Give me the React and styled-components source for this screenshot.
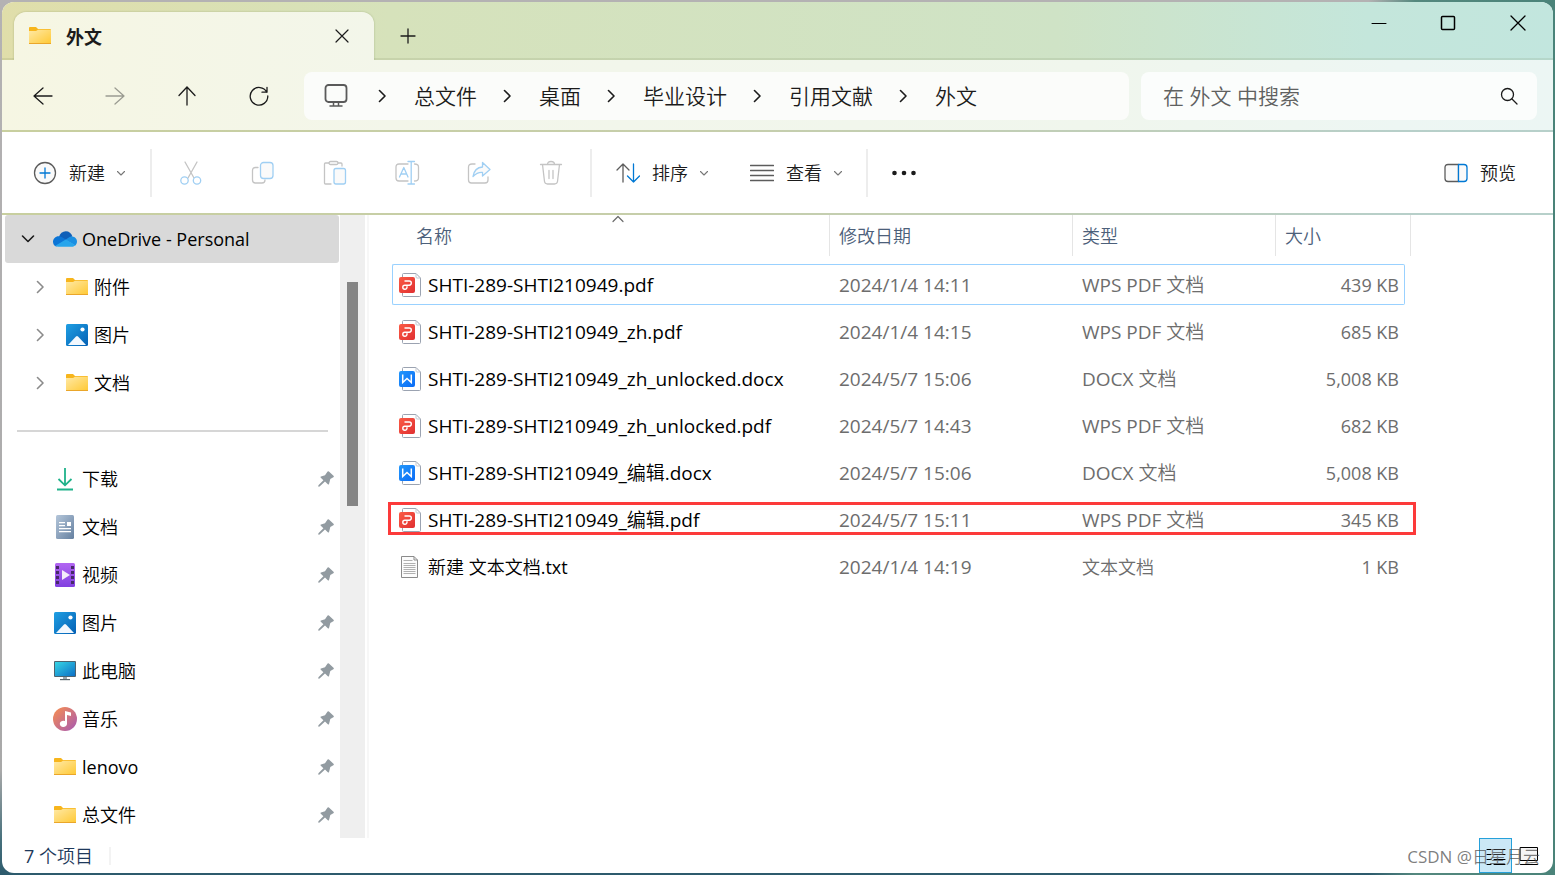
import React from 'react';
import styled, { createGlobalStyle } from 'styled-components';

const colors = {
	ink: '#1b1b1b',
	text: '#000',
	muted: '#6d6d6d',
	header: '#4c607a',
	status: '#1e395b',
	line: '#e5e5e5',
	disabled: '#c4c4c4',
	disabledBlue: '#a0cff3',
	glyph: '#5c5c5c',
	blue: '#0078d4',
	chrome: 'linear-gradient(90deg, #e0deaa 0%, #d6e2bb 25%, #cfe3c6 68%, #c4e6db 88%, #c2e6de 100%)',
	chromeLight: 'linear-gradient(90deg, #f6f6e3 0%, #f3f6ea 25%, #f0f6ed 70%, #edf6f3 90%, #ecf6f4 100%)',
	edge: 'linear-gradient(90deg, #c8cf9f 0%, #c6ceab 45%, #bfceb9 72%, #b7cfc9 90%, #b7d0ca 100%)'
};

const GlobalStyle = createGlobalStyle`
	* {
		box-sizing: border-box;
	}
	body {
		margin: 0;
		font-family: 'Open Sans', 'Noto Sans CJK SC DemiLight', 'Noto Sans CJK SC', sans-serif;
		font-size: 18px;
		line-height: 24px;
		color: ${colors.text};
		overflow: hidden;
	}
	button, input {
		font: inherit;
		color: inherit;
		border: none;
		background: none;
		padding: 0;
		margin: 0;
	}
	a {
		color: inherit;
		text-decoration: none;
	}
	svg {
		display: block;
		flex: none;
	}
`;

const Desktop = styled.div`
	height: 100vh;
	padding: 2px;
	background:
		linear-gradient(90deg, transparent 88%, #54887e 91%, #4a8379 100%),
		linear-gradient(180deg, #b4b2b3 0%, #a9a9a9 88%, #47707c 96%, #2c5a6c 100%);
`;

const Window = styled.div`
	height: 100%;
	display: flex;
	flex-direction: column;
	position: relative;
	overflow: hidden;
	border-radius: 12px;
	background: #fff;
`;

const TabStrip = styled.header`
	height: 58px;
	flex: none;
	display: flex;
	align-items: flex-end;
	padding-left: 12px;
	background: ${colors.chrome};
	box-shadow: inset 0 -2px 0 rgba(90, 110, 60, 0.12);
`;

const Tab = styled.div`
	width: 360px;
	height: 48px;
	display: flex;
	align-items: center;
	padding: 0 25px 0 14px;
	border-radius: 12px 12px 0 0;
	background: linear-gradient(90deg, #f6f6e3, #f3f6ea);
	box-shadow: 0 0 2px rgba(90, 110, 60, 0.4);
`;

const TabTitle = styled.span`
	flex: 1;
	margin-left: 14px;
	font-family: 'Noto Sans CJK SC', sans-serif;
	font-weight: 700;
	color: ${colors.ink};
`;

const IconButton = styled.button`
	width: ${props => props.$width || 72}px;
	height: 48px;
	display: flex;
	align-items: center;
	justify-content: center;
`;

const Caption = styled.div`
	display: flex;
	align-self: flex-start;
	margin-left: auto;
	button {
		height: 42px;
	}
`;

const NavBar = styled.nav`
	height: 70px;
	flex: none;
	display: flex;
	align-items: center;
	padding: 2px 16px 0 5px;
	background: ${colors.chromeLight};
`;

const Edge = styled.div`
	height: 2px;
	flex: none;
	background: ${colors.edge};
`;

const Address = styled.div`
	flex: 1;
	height: 48px;
	margin: 0 12px 0 9px;
	padding-left: 20px;
	display: flex;
	align-items: center;
	border-radius: 8px;
	background: #fbfcfa;
	font-size: 21px;
	color: ${colors.ink};
	white-space: nowrap;
`;

const Crumb = styled.a`
	margin-left: 26px;
	display: flex;
	align-items: center;
	gap: 28px;
	&:first-of-type {
		margin-left: 30px;
	}
`;

const SearchBox = styled.label`
	width: 396px;
	height: 48px;
	display: flex;
	align-items: center;
	padding: 0 18px 0 22px;
	border-radius: 8px;
	background: #fbfdfc;
	input {
		flex: 1;
		min-width: 0;
		font-size: 21px;
		outline: none;
	}
	input::placeholder {
		color: #5f6160;
		opacity: 1;
	}
`;

const Toolbar = styled.div`
	height: 81px;
	flex: none;
	display: flex;
	align-items: center;
	padding: 0 37px 0 31px;
	color: ${colors.ink};
`;

const ToolButton = styled.button`
	height: 48px;
	display: flex;
	align-items: center;
	gap: 12px;
	margin-right: ${props => props.$after || 0}px;
	margin-left: ${props => (props.$end ? 'auto' : 0)};
`;

const Separator = styled.div`
	width: 2px;
	height: 48px;
	margin: 0 ${props => props.$after || 0}px 0 ${props => props.$before || 0}px;
	background: #ededed;
`;

const Body = styled.div`
	flex: 1;
	min-height: 0;
	display: flex;
`;

const Sidebar = styled.aside`
	width: 338px;
	flex: none;
	padding: 0 1px 0 3px;
	overflow: hidden;
`;

const SideItem = styled.a`
	height: 48px;
	display: flex;
	align-items: center;
	padding: 0 5px 0 ${props => (props.$nested ? 24 : 12)}px;
	border-radius: 3px;
	background: ${props => (props.$selected ? '#d9d9d9' : 'transparent')};
	> svg:last-child {
		margin-left: auto;
	}
`;

const Arrow = styled.span`
	width: 22px;
	display: flex;
	justify-content: center;
`;

const SideIcon = styled.span`
	width: 24px;
	margin: 0 5px 0 14px;
	display: flex;
	justify-content: center;
`;

const Divider = styled.hr`
	height: 2px;
	margin: 23px 11px 23px 12px;
	border: none;
	background: #d6d6d6;
`;

const Scrollbar = styled.div`
	width: 25px;
	flex: none;
	padding: 67px 7px 0;
	background: #efefef;
`;

const Thumb = styled.div`
	height: 224px;
	background: #858585;
`;

const Pane = styled.main`
	flex: 1;
	min-width: 0;
	margin-left: 2px;
	padding-left: 23px;
	border-left: 2px solid #f7f7f7;
`;

const FileTable = styled.table`
	width: 1013px;
	margin-top: -6px;
	table-layout: fixed;
	border-collapse: separate;
	border-spacing: 0 6px;
`;

const HeadCell = styled.th`
	width: ${props => props.$width}px;
	height: 43px;
	padding: 0;
	vertical-align: top;
	text-align: left;
	font-weight: inherit;
	color: ${colors.header};
`;

const HeadLabel = styled.div`
	height: 41px;
	display: flex;
	align-items: center;
	position: relative;
	padding-left: ${props => (props.$first ? 24 : 9)}px;
	margin-right: ${props => (props.$last ? -6 : 0)}px;
	border-right: 1px solid ${colors.line};
`;

const SortMark = styled.span`
	position: absolute;
	top: 0;
	left: 220px;
`;

const Row = styled.tr`
	position: relative;
	height: 41px;
	td {
		border: 1px solid ${props => (props.$focused ? '#99d1ff' : 'transparent')};
		border-left-width: 0;
		border-right-width: 0;
		white-space: nowrap;
	}
	td:first-child {
		border-left-width: 1px;
		border-radius: 2px 0 0 2px;
	}
	td:last-child {
		border-right-width: 1px;
		border-radius: 0 2px 2px 0;
	}
`;

const Cell = styled.td`
	padding: 0 5px 0 9px;
	font-size: ${props => (props.$latin ? 19 : 18)}px;
	text-align: ${props => props.$align || 'left'};
	color: ${colors.muted};
`;

const NameCell = styled.td`
	padding: 0 0 0 6px;
	font-size: ${props => (props.$latin ? 19 : 18)}px;
	color: ${colors.text};
`;

const FileName = styled.a`
	display: flex;
	align-items: center;
	gap: 7px;
`;

const Highlight = styled.span`
	position: absolute;
	top: 3px;
	right: -11px;
	bottom: 5px;
	left: -4px;
	border: 3px solid #fc3a3a;
	pointer-events: none;
`;

const StatusBar = styled.footer`
	height: 35px;
	flex: none;
	display: flex;
	align-items: center;
	padding: 0 8px 0 22px;
	color: ${colors.status};
`;

const StatusRule = styled.span`
	width: 2px;
	height: 18px;
	margin: 0 auto 0 16px;
	background: #f3f3f3;
`;

const ViewButton = styled.button`
	width: 33px;
	height: 35px;
	display: flex;
	align-items: center;
	justify-content: center;
	border: 1px solid ${props => (props.$active ? '#26a0da' : 'transparent')};
	background: ${props => (props.$active ? '#cbe8f6' : 'transparent')};
`;

const Watermark = styled.span`
	position: absolute;
	right: 13px;
	bottom: 4px;
	font-size: 17px;
	color: rgba(70, 70, 70, 0.7);
	pointer-events: none;
`;

/* ---------- icons ---------- */

const Line = ({ w = 24, h = 24, color = colors.ink, width = 1.3, children }) => (
	<svg width={w} height={h} viewBox={`0 0 ${w} ${h}`} fill="none" stroke={color} strokeWidth={width} strokeLinecap="round" strokeLinejoin="round" aria-hidden="true">
		{children}
	</svg>
);

const ChevronRight = ({ color = colors.ink, width = 1.6 }) => (
	<Line w={8} h={14} color={color} width={width}>
		<path d="M1.500 1.500 7 7l-5.500 5.500" />
	</Line>
);

const ChevronDown = () => (
	<Line w={8} h={8} color="#777" width={1.1}>
		<path d="M.500 2.500L4 6l3.500-3.500" />
	</Line>
);

const Folder = () => (
	<svg width="24" height="20" viewBox="0 0 24 20" aria-hidden="true">
		<defs>
			<linearGradient id="folder" x1="0" y1="0" x2="1" y2="1">
				<stop offset="0" stopColor="#ffe9a6" />
				<stop offset="1" stopColor="#ffc935" />
			</linearGradient>
		</defs>
		<path d="M1 2q0-1 1-1h6l2 2h12q1 0 1 1v2H1z" fill="#f7b51c" />
		<path d="M1 5h7l2-1.200h13V17.500H1z" fill="url(#folder)" />
		<path d="M1 17h22v1H1z" fill="#eaa62a" />
	</svg>
);

const Cloud = () => (
	<svg width="24" height="16" viewBox="0 0 24 16" aria-hidden="true">
		<path d="M6 6C7 2.500 9.500.300 12.800.300c3.200 0 5.700 2 6.500 5L13 10z" fill="#0f5fb8" />
		<path d="M5.500 5.200c2 0 3 .6 4.500 1.600l6 4L3 15.500C1.200 14.700 0 13 0 10.800 0 7.700 2.500 5.200 5.500 5.200z" fill="#0c75d6" />
		<path d="M18.800 5.500c2.900 0 5.200 2.200 5.200 5 0 1.600-.7 3-1.800 3.900L12.500 8.800c2-1 3.700-3.300 6.300-3.300z" fill="#1a8fe2" />
		<path d="M12.800 8.500l9.700 5.700c-.9.900-2.200 1.500-3.500 1.500H5.300c-1.200 0-2.200-.4-3-.9z" fill="#27a5ec" />
	</svg>
);

const Picture = () => (
	<svg width="22" height="22" viewBox="0 0 22 22" aria-hidden="true">
		<defs>
			<linearGradient id="picture" x1="0" y1="0" x2="1" y2="1">
				<stop offset="0" stopColor="#1f9fe3" />
				<stop offset="1" stopColor="#0460b4" />
			</linearGradient>
		</defs>
		<rect width="22" height="22" rx="1.500" fill="url(#picture)" />
		<path d="M2 21l8-8.500q1-1 2 0l8 8.500z" fill="#f2f8fe" />
		<circle cx="16.500" cy="5.500" r="2.100" fill="#fff" />
	</svg>
);

const Download = () => (
	<svg width="18" height="24" viewBox="0 0 18 24" fill="none" stroke="#1fb28a" strokeWidth="1.800" aria-hidden="true">
		<path d="M9 1v17M2.500 12L9 18.300l6.500-6.300M1 22.500h16" />
	</svg>
);

const Document = () => (
	<svg width="18" height="24" viewBox="0 0 18 24" aria-hidden="true">
		<defs>
			<linearGradient id="doc" x1="0" y1="0" x2="1" y2="1">
				<stop offset="0" stopColor="#b4c6da" />
				<stop offset="1" stopColor="#6580a0" />
			</linearGradient>
		</defs>
		<rect width="18" height="24" rx="1.500" fill="url(#doc)" />
		<path d="M3 7h6v1.300H3zM3 10h6v1.300H3zM3 13h12v1.300H3zM3 16h12v1.300H3zM11 7h4v4h-4z" fill="#fff" />
	</svg>
);

const Video = () => (
	<svg width="20" height="24" viewBox="0 0 20 24" aria-hidden="true">
		<defs>
			<linearGradient id="video" x1="0" y1="0" x2="0" y2="1">
				<stop offset="0" stopColor="#b266f2" />
				<stop offset="1" stopColor="#8140e0" />
			</linearGradient>
		</defs>
		<rect width="20" height="24" rx="1.500" fill="url(#video)" />
		<path d="M1 3h3v3H1zM1 8h3v3H1zM1 13h3v3H1zM1 18h3v3H1zM16 3h3v3h-3zM16 8h3v3h-3zM16 13h3v3h-3zM16 18h3v3h-3z" fill="#472a68" />
		<path d="M7 7l8 5-8 5z" fill="#f3ecfa" />
	</svg>
);

const Monitor = () => (
	<svg width="22" height="20" viewBox="0 0 22 20" aria-hidden="true">
		<defs>
			<linearGradient id="monitor" x1="0" y1="0" x2="1" y2="1">
				<stop offset="0" stopColor="#36d5e5" />
				<stop offset="1" stopColor="#0c6fc6" />
			</linearGradient>
		</defs>
		<rect width="22" height="16" rx="1" fill="#4d6370" />
		<rect x="1" y="1" width="20" height="14" fill="url(#monitor)" />
		<path d="M9 16h4v2H9z" fill="#9aa7ae" />
		<path d="M6 18h10v1.200H6z" fill="#59666d" />
	</svg>
);

const Music = () => (
	<svg width="24" height="24" viewBox="0 0 24 24" aria-hidden="true">
		<defs>
			<linearGradient id="music" x1="0" y1="0" x2="1" y2="1">
				<stop offset=".1" stopColor="#f18a58" />
				<stop offset="1" stopColor="#a558b4" />
			</linearGradient>
		</defs>
		<circle cx="12" cy="12" r="12" fill="url(#music)" />
		<path d="M12 4l6 1.500V9l-4-1v9a3.600 3.200 0 1 1-2-3z" fill="#fff" />
	</svg>
);

const Pin = () => (
	<svg width="16" height="16" viewBox="0 0 16 16" aria-hidden="true">
		<path d="M9.600.400q.7-.5 1.300.1l4.600 4.300q.8.900-.2 1.500l-3 1.700q-.6 2.500-1.300 5-.4 1-1.200.3L7 10.600 1.600 15.600.300 15.700l.1-1.400L5.400 9.200 2.800 6.800q-.8-.9.200-1.300l4-1.300z" fill="#929ba1" />
	</svg>
);

const Sheet = ({ from, to, id, children }) => (
	<svg width="22" height="24" viewBox="0 0 22 24" fill="none" aria-hidden="true">
		<defs>
			<linearGradient id={id} x1="0" y1="0" x2="1" y2="1">
				<stop offset="0" stopColor={from} />
				<stop offset="1" stopColor={to} />
			</linearGradient>
		</defs>
		<path d="M3.500 4V1.500q0-1 1-1H17L21.500 5v17.500q0 1-1 1h-16q-1 0-1-1V20" fill="#fff" stroke="#9ba3b1" />
		<path d="M17 .5V4q0 1 1 1h3.500" stroke="#c3c8d1" />
		<rect y="4" width="16" height="16" rx="2" fill={`url(#${id})`} />
		{children}
	</svg>
);

const PdfIcon = () => (
	<Sheet id="pdf" from="#fb5b45" to="#e02f31">
		<path d="M6 8h4.200a2.100 2.100 0 0 1 0 4.200H5.800a2 2 0 0 0 0 4 2 2 0 0 0 2.200-2v-.6" stroke="#fff" strokeWidth="1.400" strokeLinecap="round" />
	</Sheet>
);

const WordIcon = () => (
	<Sheet id="word" from="#2498fb" to="#0a6bf6">
		<path d="M3.700 7.500v8L8 11.500l4.300 4v-8" stroke="#fff" strokeWidth="1.500" />
	</Sheet>
);

const TextIcon = () => (
	<svg width="22" height="22" viewBox="0 0 22 22" fill="none" aria-hidden="true">
		<path d="M2.500.500H15L18.500 4v17.500h-16z" fill="#fcfcfc" stroke="#8b8b8b" />
		<path d="M15 .5V4h3.500" stroke="#8b8b8b" />
		<path d="M4.500 4.500h9M4.500 7.500h12M4.500 9.500h12M4.500 11.500h12M4.500 13.500h12M4.500 15.500h12M4.500 17.500h12" stroke="#b1b1b1" />
	</svg>
);

/* ---------- data ---------- */

const crumbs = ['总文件', '桌面', '毕业设计', '引用文献', '外文'];

const cloudItems = [
	{ name: '附件', icon: Folder },
	{ name: '图片', icon: Picture },
	{ name: '文档', icon: Folder }
];

const pinned = [
	{ name: '下载', icon: Download },
	{ name: '文档', icon: Document },
	{ name: '视频', icon: Video },
	{ name: '图片', icon: Picture },
	{ name: '此电脑', icon: Monitor },
	{ name: '音乐', icon: Music },
	{ name: 'lenovo', icon: Folder },
	{ name: '总文件', icon: Folder }
];

const files = [
	{ name: 'SHTI-289-SHTI210949.pdf', date: '2024/1/4 14:11', type: 'WPS PDF 文档', size: '439 KB', icon: PdfIcon, focused: true },
	{ name: 'SHTI-289-SHTI210949_zh.pdf', date: '2024/1/4 14:15', type: 'WPS PDF 文档', size: '685 KB', icon: PdfIcon },
	{ name: 'SHTI-289-SHTI210949_zh_unlocked.docx', date: '2024/5/7 15:06', type: 'DOCX 文档', size: '5,008 KB', icon: WordIcon },
	{ name: 'SHTI-289-SHTI210949_zh_unlocked.pdf', date: '2024/5/7 14:43', type: 'WPS PDF 文档', size: '682 KB', icon: PdfIcon },
	{ name: 'SHTI-289-SHTI210949_编辑.docx', date: '2024/5/7 15:06', type: 'DOCX 文档', size: '5,008 KB', icon: WordIcon },
	{ name: 'SHTI-289-SHTI210949_编辑.pdf', date: '2024/5/7 15:11', type: 'WPS PDF 文档', size: '345 KB', icon: PdfIcon, marked: true },
	{ name: '新建 文本文档.txt', date: '2024/1/4 14:19', type: '文本文档', size: '1 KB', icon: TextIcon }
];

const isLatin = text => /^\w/.test(text);

/* ---------- parts ---------- */

const TitleBar = () => (
	<TabStrip>
		<Tab>
			<Folder />
			<TabTitle>外文</TabTitle>
			<button aria-label="关闭标签页">
				<Line w={14} h={14} width={1.2}>
					<path d="M1 1l12 12M13 1L1 13" />
				</Line>
			</button>
		</Tab>
		<IconButton $width={68} aria-label="新建标签页">
			<Line w={16} h={16} width={1.3}>
				<path d="M8 1v14M1 8h14" />
			</Line>
		</IconButton>
		<Caption>
			<IconButton $width={68} aria-label="最小化">
				<Line w={16} h={16} color="#000" width={1}>
					<path d="M1 8.500h14" />
				</Line>
			</IconButton>
			<IconButton $width={70} aria-label="最大化">
				<Line w={16} h={16} color="#000" width={1.5}>
					<rect x="1.500" y="1.500" width="13" height="13" rx="1" />
				</Line>
			</IconButton>
			<IconButton $width={70} aria-label="关闭">
				<Line w={16} h={16} color="#000">
					<path d="M1 1l14 14M15 1L1 15" />
				</Line>
			</IconButton>
		</Caption>
	</TabStrip>
);

const Navigation = () => (
	<NavBar>
		<IconButton aria-label="后退">
			<Line w={20} h={20}>
				<path d="M19 10H1M10 2L1 10l9 8" />
			</Line>
		</IconButton>
		<IconButton aria-label="前进" disabled>
			<Line w={20} h={20} color="#9b9c92">
				<path d="M1 10h18M10 2l9 8-9 8" />
			</Line>
		</IconButton>
		<IconButton aria-label="向上">
			<Line w={20} h={20}>
				<path d="M10 19V1M2 9.500L10 1l8 8.500" />
			</Line>
		</IconButton>
		<IconButton aria-label="刷新">
			<Line w={20} h={20}>
				<path d="M17.800 6.200A8.800 8.800 0 1 0 18.800 10M18 1.500V6.200H13" />
			</Line>
		</IconButton>
		<Address>
			<Line color="#5a5a5a" width={1.8}>
				<rect x="1.500" y="1" width="21" height="17" rx="3" />
				<path d="M9.500 18v3.500M14.500 18v3.500M6 22h12" strokeWidth={1.5} />
			</Line>
			{crumbs.map(name => (
				<Crumb key={name} href="#">
					<ChevronRight />
					{name}
				</Crumb>
			))}
		</Address>
		<SearchBox>
			<input aria-label="搜索" placeholder="在 外文 中搜索" />
			<Line w={20} h={20}>
				<circle cx="8.500" cy="8.500" r="6" />
				<path d="M13 13l5 5" />
			</Line>
		</SearchBox>
	</NavBar>
);

const Commands = () => (
	<Toolbar>
		<ToolButton $after={25}>
			<Line>
				<circle cx="12" cy="12" r="10.500" fill="#fafafa" stroke={colors.glyph} />
				<path d="M12 7v10M7 12h10" stroke={colors.blue} />
			</Line>
			新建
			<ChevronDown />
		</ToolButton>
		<Separator $after={3} />
		<IconButton aria-label="剪切" disabled>
			<Line w={24} h={26} color={colors.disabled}>
				<path d="M6 2l9 16M18 2L9 18" />
				<circle cx="5.500" cy="20.500" r="3.700" stroke={colors.disabledBlue} fill="#fff" />
				<circle cx="18" cy="20.500" r="3.700" stroke={colors.disabledBlue} fill="#fff" />
			</Line>
		</IconButton>
		<IconButton aria-label="复制" disabled>
			<Line color={colors.disabled}>
				<path d="M7 6.500H4.500Q1.500 6.500 1.500 9.500v9.500q0 3 3 3H11q3 0 3-3" />
				<rect x="9.500" y="1.500" width="12.500" height="16" rx="3" stroke={colors.disabledBlue} fill="#fafafa" />
			</Line>
		</IconButton>
		<IconButton aria-label="粘贴" disabled>
			<Line h={26} color={colors.disabled}>
				<path d="M8 24H2.500q-1 0-1-1V4q0-1 1-1H6M15 3h3q1 0 1 1v2" />
				<rect x="6" y="1.500" width="9" height="3" rx="1.500" />
				<rect x="11" y="8.500" width="11.500" height="15.500" rx="2" stroke={colors.disabledBlue} fill="#fafafa" />
			</Line>
		</IconButton>
		<IconButton aria-label="重命名" disabled>
			<Line w={26} h={26} color={colors.disabled}>
				<path d="M14 4H5Q2 4 2 7v11q0 3 3 3h9M20.500 4q4 0 4 3v11q0 3-4 3" />
				<path d="M14 1.500h6.500M14 24h6.500M17.200 1.500V24M5.500 17L9.800 7.500 14 17M7 14h5.500" stroke={colors.disabledBlue} />
			</Line>
		</IconButton>
		<IconButton aria-label="共享" disabled>
			<Line color={colors.disabled}>
				<path d="M8 3H5Q1.500 3 1.500 6v13q0 3 3 3H18q3 0 3-3v-3" />
				<path d="M15.500 1.500l7.500 7-7.500 6.500V11.500q-5-.5-9.500 4 1.500-9 9.500-9.500z" stroke={colors.disabledBlue} fill="#fafafa" />
			</Line>
		</IconButton>
		<IconButton aria-label="删除" disabled>
			<Line h={26} color={colors.disabled}>
				<path d="M1.500 4.500h21M8.500 4.500q0-3 3.500-3t3.500 3M3.500 4.500l2 17q.4 2.500 3 2.500h7q2.600 0 3-2.500l2-17M10 10.500v8M14 10.500v8" />
			</Line>
		</IconButton>
		<Separator $before={3} $after={24} />
		<ToolButton $after={42}>
			<Line>
				<path d="M7 21V3M1 9l6-6 6 6" stroke={colors.glyph} />
				<path d="M17.500 3v18M11.500 15l6 6 6-6" stroke={colors.blue} />
			</Line>
			排序
			<ChevronDown />
		</ToolButton>
		<ToolButton $after={24}>
			<Line color={colors.glyph}>
				<path d="M.500 4.500h23M.500 9.500h23M.500 14.500h23M.500 19.500h23" />
			</Line>
			查看
			<ChevronDown />
		</ToolButton>
		<Separator />
		<IconButton aria-label="更多">
			<svg width="24" height="6" viewBox="0 0 24 6" fill={colors.ink} aria-hidden="true">
				<circle cx="2.500" cy="3" r="2.300" />
				<circle cx="12" cy="3" r="2.300" />
				<circle cx="21.500" cy="3" r="2.300" />
			</svg>
		</IconButton>
		<ToolButton $end>
			<Line>
				<path d="M14.500 3.500H4q-3 0-3 3v11q0 3 3 3h10.500z" stroke={colors.glyph} fill="#fafafa" />
				<path d="M14.500 3.500H20q3 0 3 3v11q0 3-3 3h-5.500z" stroke={colors.blue} fill="#fafafa" />
			</Line>
			预览
		</ToolButton>
	</Toolbar>
);

const SideNav = () => (
	<Sidebar>
		<SideItem href="#" $selected>
			<Arrow>
				<Line w={14} h={10} width={1.6}>
					<path d="M1.500 2L7 7.500 12.500 2" />
				</Line>
			</Arrow>
			<SideIcon>
				<Cloud />
			</SideIcon>
			OneDrive - Personal
		</SideItem>
		{cloudItems.map(({ name, icon: Icon }) => (
			<SideItem key={name} href="#" $nested>
				<Arrow>
					<ChevronRight color="#8b8b8b" />
				</Arrow>
				<SideIcon>
					<Icon />
				</SideIcon>
				{name}
			</SideItem>
		))}
		<Divider />
		{pinned.map(({ name, icon: Icon }) => (
			<SideItem key={name} href="#">
				<Arrow />
				<SideIcon>
					<Icon />
				</SideIcon>
				{name}
				<Pin />
			</SideItem>
		))}
	</Sidebar>
);

const FileList = () => (
	<Pane>
		<FileTable>
			<thead>
				<tr>
					<HeadCell $width={438}>
						<HeadLabel $first>
							名称
							<SortMark>
								<Line w={12} h={8} color="#6b6b6b" width={1.2}>
									<path d="M1 6.500l5-5 5 5" />
								</Line>
							</SortMark>
						</HeadLabel>
					</HeadCell>
					<HeadCell $width={243}>
						<HeadLabel>修改日期</HeadLabel>
					</HeadCell>
					<HeadCell $width={203}>
						<HeadLabel>类型</HeadLabel>
					</HeadCell>
					<HeadCell $width={129}>
						<HeadLabel $last>大小</HeadLabel>
					</HeadCell>
				</tr>
			</thead>
			<tbody>
				{files.map(({ name, date, type, size, icon: Icon, focused, marked }) => (
					<Row key={name} $focused={focused}>
						<NameCell $latin={isLatin(name)}>
							<FileName href="#">
								<Icon />
								{name}
							</FileName>
							{marked && <Highlight />}
						</NameCell>
						<Cell $latin>{date}</Cell>
						<Cell $latin={isLatin(type)}>{type}</Cell>
						<Cell $align="right">{size}</Cell>
					</Row>
				))}
			</tbody>
		</FileTable>
	</Pane>
);

const App = () => (
	<Desktop>
		<GlobalStyle />
		<Window>
			<TitleBar />
			<Navigation />
			<Edge />
			<Commands />
			<Edge />
			<Body>
				<SideNav />
				<Scrollbar>
					<Thumb />
				</Scrollbar>
				<FileList />
			</Body>
			<StatusBar>
				7 个项目
				<StatusRule />
				<ViewButton $active aria-label="详细信息">
					<Line w={20} h={20} color="#000" width={1}>
						<path d="M1 3.500h4M8 3.500h11M1 8.500h4M8 8.500h11M1 13.500h4M8 13.500h11M1 18.500h4M8 18.500h11" />
					</Line>
				</ViewButton>
				<ViewButton aria-label="大图标">
					<Line w={20} h={20} color="#000" width={1}>
						<rect x="1.500" y="1.500" width="17" height="13" fill="#f5f5f5" />
						<path d="M1.500 18.500h17" />
					</Line>
				</ViewButton>
			</StatusBar>
			<Watermark>CSDN @日星月云</Watermark>
		</Window>
	</Desktop>
);

export default App;
